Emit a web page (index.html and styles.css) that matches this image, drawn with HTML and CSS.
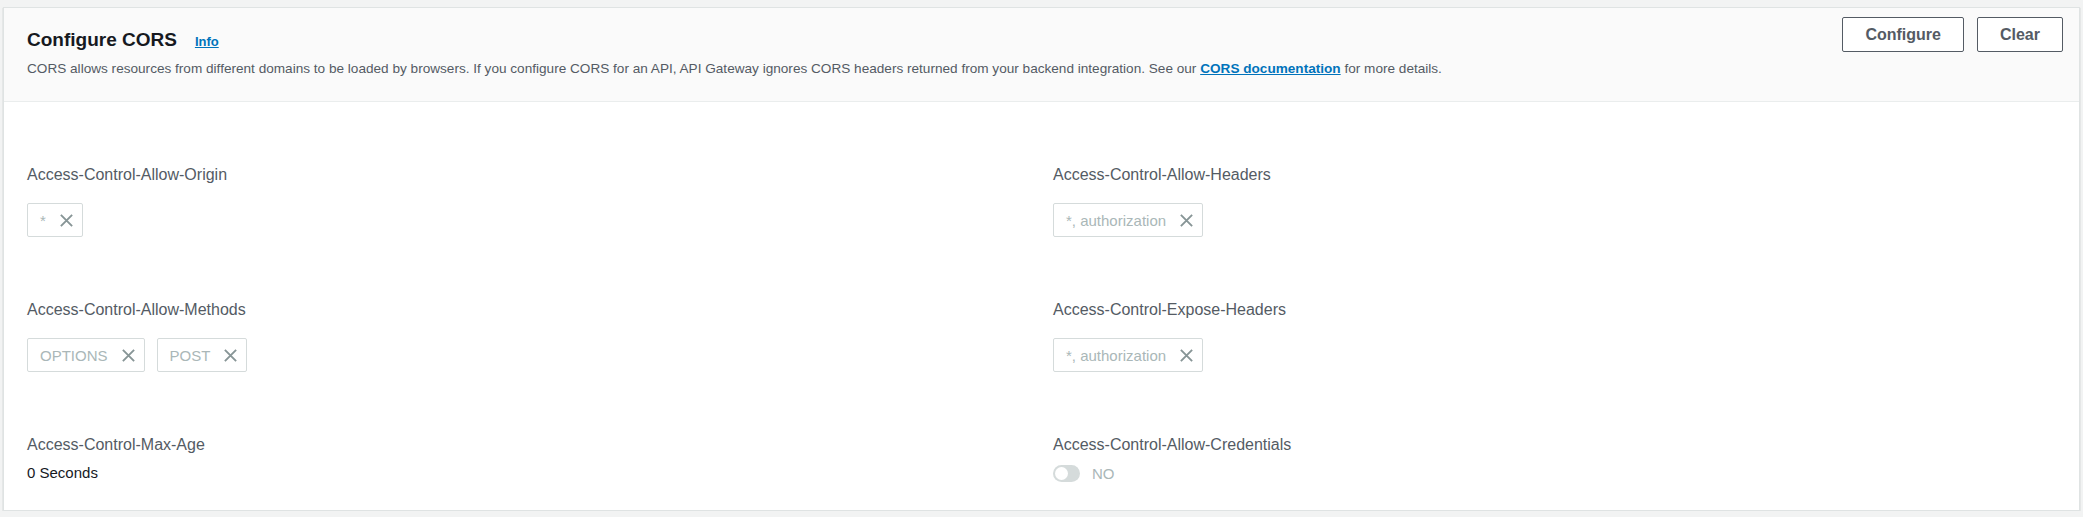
FILE: index.html
```html
<!DOCTYPE html>
<html lang="en">
<head>
<meta charset="utf-8">
<title>Configure CORS</title>
<link rel="stylesheet" href="styles.css">
</head>
<body>
<div class="card">
  <div class="card-header">
    <div class="header-text">
      <div class="title-row">
        <h2 class="title">Configure CORS</h2>
        <a class="info-link" href="#">Info</a>
      </div>
      <p class="description">CORS allows resources from different domains to be loaded by browsers. If you configure CORS for an API, API Gateway ignores CORS headers returned from your backend integration. See our <a class="doc-link" href="#">CORS documentation</a> for more details.</p>
    </div>
    <div class="actions">
      <button class="btn">Configure</button>
      <button class="btn">Clear</button>
    </div>
  </div>
  <div class="card-body">
    <div class="field">
      <div class="label">Access-Control-Allow-Origin</div>
      <div class="tokens">
        <span class="token"><span class="token-text">*</span><svg class="x" viewBox="0 0 16 16"><path d="M2 2L14 14M14 2L2 14"/></svg></span>
      </div>
    </div>
    <div class="field">
      <div class="label">Access-Control-Allow-Headers</div>
      <div class="tokens">
        <span class="token"><span class="token-text">*, authorization</span><svg class="x" viewBox="0 0 16 16"><path d="M2 2L14 14M14 2L2 14"/></svg></span>
      </div>
    </div>
    <div class="field">
      <div class="label">Access-Control-Allow-Methods</div>
      <div class="tokens">
        <span class="token"><span class="token-text">OPTIONS</span><svg class="x" viewBox="0 0 16 16"><path d="M2 2L14 14M14 2L2 14"/></svg></span>
        <span class="token"><span class="token-text">POST</span><svg class="x" viewBox="0 0 16 16"><path d="M2 2L14 14M14 2L2 14"/></svg></span>
      </div>
    </div>
    <div class="field">
      <div class="label">Access-Control-Expose-Headers</div>
      <div class="tokens">
        <span class="token"><span class="token-text">*, authorization</span><svg class="x" viewBox="0 0 16 16"><path d="M2 2L14 14M14 2L2 14"/></svg></span>
      </div>
    </div>
    <div class="field">
      <div class="label">Access-Control-Max-Age</div>
      <div class="value">0 Seconds</div>
    </div>
    <div class="field">
      <div class="label">Access-Control-Allow-Credentials</div>
      <div class="toggle-row">
        <span class="toggle"><span class="knob"></span></span>
        <span class="toggle-text">NO</span>
      </div>
    </div>
  </div>
</div>
</body>
</html>
```
FILE: styles.css
```css
* { box-sizing: border-box; }
html, body {
  margin: 0;
  padding: 0;
  background: #f2f3f3;
  font-family: "Liberation Sans", Arial, sans-serif;
}
body {
  padding: 7px 3px 0 3px;
}
.card {
  background: #ffffff;
  border: 1px solid #dfe3e3;
  box-shadow: 0 1px 1px 0 rgba(0, 28, 36, 0.3);
}
.card-header {
  display: flex;
  justify-content: space-between;
  align-items: flex-start;
  background: #fafafa;
  border-bottom: 1px solid #eaeded;
  padding: 9px 16px 22px 23px;
}
.header-text {
  padding-top: 9px;
}
.title-row {
  display: flex;
  align-items: baseline;
  gap: 18px;
  height: 28px;
  line-height: 28px;
}
.title {
  margin: 0;
  font-size: 19px;
  font-weight: 700;
  color: #16191f;
}
.info-link {
  font-size: 13px;
  font-weight: 700;
  color: #0073bb;
  text-decoration: underline;
}
.description {
  margin: 5px 0 0 0;
  font-size: 13.6px;
  line-height: 20px;
  color: #545b64;
}
.doc-link {
  color: #0073bb;
  font-weight: 700;
  text-decoration: underline;
}
.actions {
  display: flex;
  gap: 13px;
}
.btn {
  height: 35px;
  padding: 0 22px;
  background: #ffffff;
  border: 1px solid #545b64;
  border-radius: 2px;
  font-family: "Liberation Sans", Arial, sans-serif;
  font-size: 16px;
  font-weight: 700;
  color: #545b64;
}
.card-body {
  display: grid;
  grid-template-columns: 1fr 1fr;
  column-gap: 23px;
  row-gap: 62px;
  padding: 62px 23px 26px 23px;
}
.label {
  font-size: 16px;
  line-height: 22px;
  color: #545b64;
}
.tokens {
  display: flex;
  gap: 12px;
  margin-top: 17px;
}
.token {
  display: inline-flex;
  align-items: center;
  gap: 13px;
  height: 34px;
  padding: 0 8px 0 12px;
  border: 1px solid #d5dbdb;
  border-radius: 2px;
  background: #ffffff;
}
.token-text {
  font-size: 15px;
  color: #aab7b8;
}
.x {
  width: 15px;
  height: 15px;
  fill: none;
  stroke: #879596;
  stroke-width: 2;
}
.value {
  margin-top: 6px;
  font-size: 15px;
  line-height: 22px;
  color: #16191f;
}
.toggle-row {
  display: flex;
  align-items: center;
  gap: 12px;
  margin-top: 6px;
  height: 22px;
}
.toggle {
  display: inline-flex;
  align-items: center;
  width: 27px;
  height: 17px;
  border-radius: 9px;
  background: #d5dbdb;
  padding: 0 2px;
}
.knob {
  width: 13px;
  height: 13px;
  border-radius: 50%;
  background: #ffffff;
}
.toggle-text {
  font-size: 15px;
  color: #aab7b8;
}
```
